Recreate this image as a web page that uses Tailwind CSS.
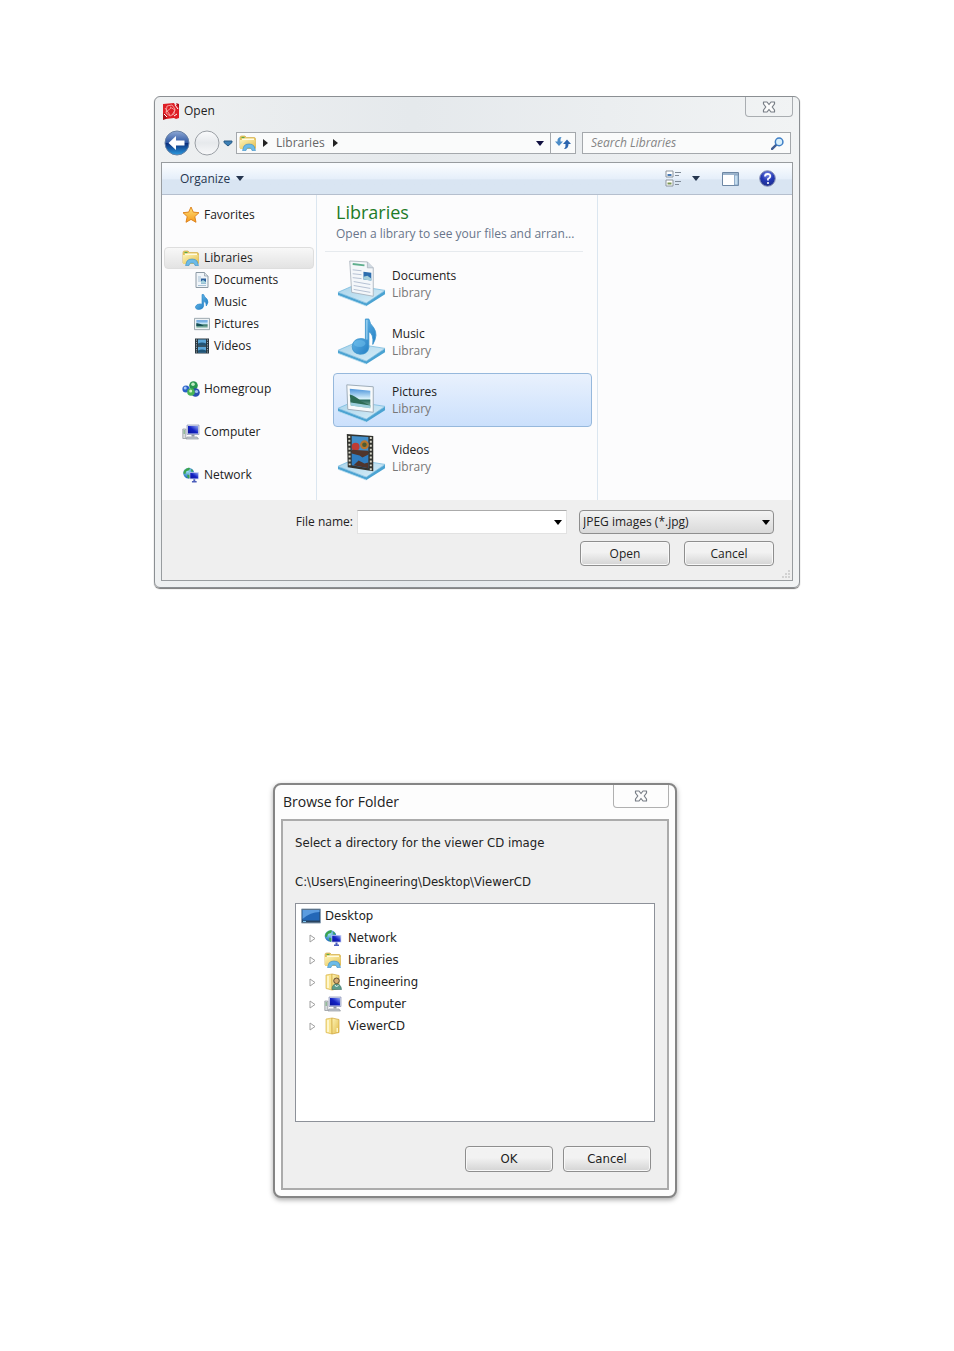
<!DOCTYPE html>
<html lang="en">
<head>
    <meta charset="UTF-8">
    <meta name="viewport" content="width=device-width, initial-scale=1.0">
    <title>Open / Browse for Folder</title>
    <script src="https://cdn.jsdelivr.net/npm/@tailwindcss/browser@4"></script>
</head>
<body class="bg-white text-xs text-[#222]">

    <!-- Shared icons -->
    <svg class="absolute size-0" aria-hidden="true">
        <defs>
            <linearGradient id="gFolder" x1="0" y1="0" x2="1" y2="1"><stop offset="0" stop-color="#fdf3b4"/><stop offset="1" stop-color="#e3bd4c"/></linearGradient>
            <linearGradient id="gNote" x1="0" y1="0" x2="1" y2="1"><stop offset="0" stop-color="#7cc8f2"/><stop offset="1" stop-color="#1473bd"/></linearGradient>
            <linearGradient id="gTray" x1="0" y1="0" x2="1" y2="1"><stop offset="0" stop-color="#a8d3ea"/><stop offset="1" stop-color="#d8eef8"/></linearGradient>
            <linearGradient id="gSky" x1="0" y1="0" x2="0" y2="1"><stop offset="0" stop-color="#4b93da"/><stop offset=".5" stop-color="#d5effa"/><stop offset=".6" stop-color="#2d6e60"/><stop offset="1" stop-color="#9cc7b9"/></linearGradient>
            <linearGradient id="gScreen" x1="0" y1="1" x2="1" y2="0"><stop offset="0" stop-color="#0a149a"/><stop offset=".5" stop-color="#1422c4"/><stop offset="1" stop-color="#8fa6f2"/></linearGradient>
            <linearGradient id="gBack" x1="0" y1="0" x2="0" y2="1"><stop offset="0" stop-color="#8ea8d4"/><stop offset=".48" stop-color="#315aa5"/><stop offset=".52" stop-color="#0b2f7d"/><stop offset="1" stop-color="#2b9be0"/></linearGradient>
            <linearGradient id="gFwd" x1="0" y1="0" x2="0" y2="1"><stop offset="0" stop-color="#fafbfc"/><stop offset=".5" stop-color="#e6e9ec"/><stop offset="1" stop-color="#f8f9fa"/></linearGradient>
            <radialGradient id="gGlobe" cx=".4" cy=".3" r=".7"><stop offset="0" stop-color="#a5e8f4"/><stop offset="1" stop-color="#1362b8"/></radialGradient>
            <radialGradient id="gHelp" cx=".5" cy=".25" r=".8"><stop offset="0" stop-color="#7a8be6"/><stop offset=".5" stop-color="#2438b4"/><stop offset="1" stop-color="#1b2c86"/></radialGradient>
            <linearGradient id="gStar" x1="0" y1="0" x2="0" y2="1"><stop offset="0" stop-color="#ffe27a"/><stop offset="1" stop-color="#f59a1b"/></linearGradient>
        </defs>

        <symbol id="down" viewBox="0 0 8 5"><path d="M0 0h8L4 5z" fill="currentColor"/></symbol>
        <symbol id="right" viewBox="0 0 5 8"><path d="M0 0v8l5-4z" fill="currentColor"/></symbol>
        <symbol id="expand" viewBox="0 0 7 9"><path d="M1 1v7l5-3.500z" fill="#fff" stroke="#a0a0a0"/></symbol>

        <symbol id="close" viewBox="0 0 14 12">
            <path d="M1.500 1h3.500L7 3.500 9 1h3.500v2L10.200 6l2.300 3v2H9L7 8.500 5 11H1.500V9l2.300-3-2.300-3z" fill="#fcfcfc" stroke="#777d85" stroke-width="1.200" stroke-linejoin="round"/>
        </symbol>

        <symbol id="app" viewBox="0 0 18 18">
            <path d="M1 2l11-1 1 2 4-1v14l-3 1-2-1-8 1-1-2-2 1z" fill="#de1f26"/>
            <path d="M5 4l5-1 3 4-1 5-4 2-4-3zM3 6l5 7M8 5l5 3-3 5M4 10l5-4" fill="none" stroke="#f9b7b4" stroke-width=".8"/>
            <path d="M1 11l4 4-1 2-3 1zM14 1l3 1v4z" fill="#a80f17"/>
            <path d="M2 12l3 3M13 3l3 4M12 14l3-2" stroke="#fff"/>
        </symbol>

        <symbol id="libraries" viewBox="0 0 18 16">
            <path d="M1 2.500Q1 1 2.500 1H6l1.500 1.500H15q1.500 0 1.500 1.500v9H1z" fill="#eccb62" stroke="#d3ae4e" stroke-width=".7"/>
            <path d="M3 3.500h12v3H3z" fill="#fffbe2"/>
            <path d="M1 5h15.500v9H1z" fill="url(#gFolder)"/>
            <path d="M2.500 2.500h3" stroke="#57a84d" stroke-width="1.200"/>
            <path d="M3.500 15.500l1.500-4.500Q6.500 9 10 9t5 2l1.500 4.500h-3.500l-.5-1.500q-.8-1-2.500-1t-2.500 1l-.5 1.500z" fill="#6cbbe8" stroke="#3a8dc6" stroke-width=".6"/>
        </symbol>

        <symbol id="folder" viewBox="0 0 18 18">
            <path d="M2 2l6-1v16l-6-1.500z" fill="#f9e591" stroke="#d9b44c" stroke-width=".7"/>
            <path d="M8 1l7 1.500v13L8 17z" fill="url(#gFolder)" stroke="#cfa53c" stroke-width=".7"/>
            <path d="M4 3v12" stroke="#fffbe0" stroke-width="1.500"/>
            <path d="M12.500 11h1.500v4h-1.500z" fill="#fff6c8"/>
        </symbol>

        <symbol id="user" viewBox="0 0 18 18">
            <use href="#folder"/>
            <path d="M8 16.500q0-5.500 4.500-5.500t5 5.500z" fill="#5d9d8b" stroke="#3b6e66" stroke-width=".6"/>
            <circle cx="12.500" cy="7.800" r="2.800" fill="#d8ad72" stroke="#55442c" stroke-width=".9"/>
            <path d="M11 12l1.500 2 2-2" fill="none" stroke="#e9f4f1"/>
        </symbol>

        <symbol id="star" viewBox="0 0 18 18">
            <path d="M9 1l2.300 5.100 5.700.6-4.200 3.900 1.200 5.700L9 13.400l-5 2.900 1.200-5.700L1 6.700l5.700-.6z" fill="url(#gStar)" stroke="#da7c14" stroke-width=".9" stroke-linejoin="round"/>
        </symbol>

        <symbol id="document" viewBox="0 0 16 16">
            <path d="M2 .5h8.500L14 4v11.500H2z" fill="#f0f5f9" stroke="#8d9aa5"/>
            <path d="M10.500.5V4H14" fill="#dbe3e8" stroke="#8d9aa5" stroke-width=".7"/>
            <path d="M4 5h3M4 7h3M4 9h3" stroke="#a8c2d6"/>
            <path d="M7 6.500h5v5H7z" fill="#2a5f9c"/>
            <path d="M7 9.500L9 8l3 2v1.500H7z" fill="#a8d3dd"/>
            <path d="M4 13.500h8" stroke="#a8c2d6"/>
        </symbol>

        <symbol id="music" viewBox="0 0 16 16">
            <path d="M8 .5h1.600q.7 2.500 3.400 4.500 2.300 2.800-.7 7 .4-3.600-2.700-4.700V12q-.4 3.200-4.800 3.500-3.800-.2-3.300-2.900.9-2.700 4.500-2.700 1.200 0 2 .4z" fill="url(#gNote)" stroke="#1c7fc7" stroke-width=".6"/>
        </symbol>

        <symbol id="picture" viewBox="0 0 17 14">
            <path d="M.5 1h16v12H.5z" fill="#eef2f4" stroke="#98a4ab"/>
            <path d="M2.500 3h12v8h-12z" fill="url(#gSky)"/>
            <path d="M2.500 6q5 .5 8 3h-8z" fill="#154f57"/>
        </symbol>

        <symbol id="video" viewBox="0 0 16 16">
            <path d="M1 .5h14v15H1z" fill="#2b3840"/>
            <path d="M4 1.500h8v5.700H4zM4 8.800h8v5.700H4z" fill="#5ca6d8"/>
            <path d="M4 5.500q4-2 8 0v1.700H4zM4 12.500q4-2 8 0v2H4z" fill="#215577"/>
            <path d="M2.500 1.500v13M13.500 1.500v13" stroke="#9fb0ba" stroke-width="1" stroke-dasharray="1.200 1.200"/>
        </symbol>

        <symbol id="homegroup" viewBox="0 0 18 16">
            <circle cx="4" cy="8" r="3.600" fill="#2a61c8"/><circle cx="3.200" cy="7" r="1.500" fill="#a9c9f8"/>
            <circle cx="11.500" cy="4.500" r="4.300" fill="#279650"/><circle cx="11" cy="3.300" r="1.800" fill="#bdeac2"/>
            <circle cx="13.500" cy="11.500" r="4.300" fill="#2950b2"/><circle cx="14.500" cy="10.500" r="1.600" fill="#a5c3f4"/>
            <circle cx="9" cy="11" r="3.800" fill="#48b455"/><circle cx="8.700" cy="10" r="1.500" fill="#d3f2c6"/>
        </symbol>

        <symbol id="computer" viewBox="0 0 18 16">
            <path d="M.8 5h3v9.500h-3z" fill="#d8dcdf" stroke="#8b9196" stroke-width=".7"/>
            <path d="M1.500 7h1.500M1.500 9h1.500" stroke="#4f9e55"/>
            <path d="M5 1h12v9.500H5z" fill="#d5daf0" stroke="#8a92b4" stroke-width=".7"/>
            <path d="M6 2h10v7.500H6z" fill="url(#gScreen)"/>
            <path d="M9.500 10.500h3v2h-3z" fill="#8d94a6"/>
            <path d="M5 13h10l1.500 2H4z" fill="#c7ccd4" stroke="#7f868f" stroke-width=".6"/>
        </symbol>

        <symbol id="network" viewBox="0 0 18 17">
            <circle cx="6.500" cy="6.500" r="5.800" fill="url(#gGlobe)"/>
            <path d="M2 3.500q3-3.500 6-2.500l-1 2.500-3 1-1 3L1 7q0-2 1-3.500zM5 8l3 1 .5 2-2 1.300q-2-1.500-1.500-4.300zM9 2q2 1 2.500 2.500L9.500 5z" fill="#3ba44c"/>
            <path d="M7.500 5.500h9.800V13H7.500z" fill="#c9d1f1"/>
            <path d="M8.200 6.200h8.400v6H8.200z" fill="url(#gScreen)"/>
            <path d="M11.500 13h2v2h-2zM10 15h5v1.500h-5z" fill="#4b5dbb"/>
        </symbol>

        <symbol id="desktop" viewBox="0 0 20 16">
            <path d="M.5 1h19v14H.5z" fill="#294461" stroke="#8ea2b5"/>
            <path d="M1.500 2h17v10.500h-17z" fill="#2367b7"/>
            <path d="M1.500 2h17v2q-9 0-17 7z" fill="#5b9ce0"/>
            <path d="M2 13.500h3" stroke="#7bc4ee"/>
        </symbol>

        <symbol id="tray" viewBox="0 0 50 50">
            <path d="M1 35L29 46 49 33v4L30 49 1 38z" fill="#4ba3d2"/>
            <path d="M1 35l16-7 32 5-19 13z" fill="url(#gTray)" stroke="#79bade" stroke-width=".8"/>
            <path d="M1 38l29 11" stroke="#b9def0" stroke-width=".8"/>
        </symbol>
        <symbol id="documents-lg" viewBox="0 2 50 50">
            <use href="#tray" width="50" height="50"/>
            <path d="M13 3l18 1 6 6v29L15 35z" fill="#f4f7fa" stroke="#a1acb6" stroke-width=".8"/>
            <path d="M31 4v6h6" fill="#cfd9e2" stroke="#a1acb6" stroke-width=".7"/>
            <path d="M16 6l12 1.500" stroke="#5faf8e" stroke-width="2"/>
            <path d="M16 12l9 1M16 16l9 1M16 20l9 1M17 24l17 3M17 28l17 3M17 32l17 3" stroke="#b3bfd2"/>
            <path d="M27 14l8 1v8l-8-1z" fill="#2c6dae"/><path d="M27 19l4-1 4 3v2l-8-1z" fill="#a5cfdb"/>
        </symbol>
        <symbol id="music-lg" viewBox="0 2 50 50">
            <use href="#tray" width="50" height="50"/>
            <path d="M29 3h3.500q1 5 5 9 5 7-1 17 1-11-4-13v16q-1 7-9 7-8-1-8-8 1-8 9-8 2.500 0 4.500 1z" fill="url(#gNote)" stroke="#3a93cc" stroke-width=".8"/>
            <ellipse cx="23" cy="28" rx="6" ry="3.500" fill="#72c2ee" opacity=".5"/>
            <path d="M30.500 4v20" stroke="#b6e1f7"/>
        </symbol>
        <symbol id="pictures-lg" viewBox="0 2 50 50">
            <use href="#tray" width="50" height="50"/>
            <path d="M10 11l27 2v26L11 36z" fill="#f8fafb" stroke="#9dabb7"/>
            <path d="M13 15l21 2v18l-20-3z" fill="url(#gSky)"/>
            <path d="M13 21q5 1 12 7l9 4v1l-20-4z" fill="#2d6c55"/>
            <path d="M14 29l20 3v3l-20-3z" fill="#9ccfdc"/>
        </symbol>
        <symbol id="videos-lg" viewBox="0 2 50 50">
            <use href="#tray" width="50" height="50"/>
            <path d="M10 2l27 2v36l-26-4z" fill="#32332f"/>
            <path d="M15 4l17 1v15l-17-1z" fill="#438fca"/><path d="M15 21l17 1v15l-17-3z" fill="#2f7dc0"/>
            <circle cx="19" cy="15" r="4" fill="#bf3b35"/><circle cx="28" cy="13" r="4.500" fill="#b9762f"/><circle cx="28" cy="13" r="2.300" fill="#4c5c33"/>
            <path d="M15 18l17 1v4l-6 3-3-2-8-2zM17 34l5-5 6 3 4-1v6l-15-3z" fill="#50352c"/>
            <path d="M12.500 4l.5 32M34.500 5v34" stroke="#d5d5c8" stroke-width="2" stroke-dasharray="2 2"/>
        </symbol>
    </svg>

    <main class="flex flex-col items-center pt-24 pb-36">

        <!-- Open dialog -->
        <section aria-label="Open" class="w-full max-w-[646px] rounded-md border border-[#8b8f93] bg-linear-to-r from-[#eef0f1] via-[#e5e9ec] via-40% to-[#f1f3f4] px-1.5 pb-1.5 font-['Open_Sans',sans-serif] shadow-[0_1px_1px_#777]">
            <header class="flex h-7 items-center pl-px">
                <svg class="size-[18px]"><use href="#app"/></svg>
                <h1 class="ml-1 flex-1">Open</h1>
                <button aria-label="Close" class="flex h-5 w-12 items-center justify-center self-start rounded-b border border-t-0 border-[#a9adb1]">
                    <svg class="h-3 w-3.5"><use href="#close"/></svg>
                </button>
            </header>

            <div class="flex items-center pt-[5px] pr-0.5 pb-1.5 pl-[3px]">
                <button aria-label="Back">
                    <svg class="size-[26px]" viewBox="0 0 26 26"><circle cx="13" cy="13" r="12" fill="url(#gBack)" stroke="#6780a3"/><path d="M4.500 13L12 6v4.500h8.500v5H12V20z" fill="#fff"/></svg>
                </button>
                <button aria-label="Forward" class="ml-1">
                    <svg class="size-[26px]" viewBox="0 0 26 26"><circle cx="13" cy="13" r="12" fill="url(#gFwd)" stroke="#9a9fa5"/></svg>
                </button>
                <button aria-label="Recent pages" class="mx-[3px]">
                    <svg class="h-[7px] w-2.5" viewBox="0 0 10 7"><path d="M1 1h8v1.500L5 6 1 2.500z" fill="#3c7fb5" stroke="#265a86"/></svg>
                </button>
                <div class="flex h-[22px] flex-1 items-center border border-[#a4a8ac] bg-[#fafbfb]">
                    <svg class="ml-0.5 h-4 w-[18px]"><use href="#libraries"/></svg>
                    <svg class="ml-1.5 h-2 w-[5px]"><use href="#right"/></svg>
                    <a href="#" class="mx-2 text-[#666]">Libraries</a>
                    <svg class="h-2 w-[5px]"><use href="#right"/></svg>
                    <button aria-label="Previous locations" class="mr-1.5 ml-auto text-[#101040]"><svg class="h-[5px] w-2"><use href="#down"/></svg></button>
                    <button aria-label="Refresh" class="flex h-full w-[25px] items-center justify-center border-l border-[#a4a8ac]">
                        <svg class="h-3 w-4" viewBox="0 0 16 12"><path d="M6.500 0Q2 0 2.500 4.500H0L4 9l4-4.500H5.500Q5 2 6.500 0z" fill="#4c8dc8"/><path d="M9 12q4.500 0 4.500-5H16l-4-4.500L8 7h2.500q.5 3-1.500 5z" fill="#2c65ae"/></svg>
                    </button>
                </div>
                <label class="ml-1.5 flex h-[22px] w-[209px] items-center border border-[#a4a8ac] bg-[#fafbfb] pr-1.5 pl-2">
                    <input type="search" aria-label="Search Libraries" placeholder="Search Libraries" class="min-w-0 flex-1 italic outline-none placeholder:text-[#858585]">
                    <svg class="size-[13px]" viewBox="0 0 12 12"><path d="M5.500 6.500L1 11" stroke="#3e5d94" stroke-width="2.200" stroke-linecap="round"/><circle cx="7.500" cy="4.500" r="3.500" fill="#d8effb" stroke="#3f7fc6" stroke-width="1.400"/></svg>
                </label>
            </div>

            <div class="border border-[#989c9f] bg-[#efefef]">
                <div class="flex h-8 items-center border-b border-[#b5bfce] bg-linear-to-b from-[#f8fbfe] from-10% via-[#e6effa] via-50% to-[#d9e5f2] to-55% pr-4 pl-[18px] text-[#26364f]">
                    <button class="flex items-center gap-1.5">Organize <svg class="h-[5px] w-2"><use href="#down"/></svg></button>
                    <button aria-label="Change view" class="ml-auto flex items-center gap-2.5">
                        <svg class="size-[17px]" viewBox="0 0 17 17"><path d="M1 1h7v6H1zM1 10h7v6H1z" fill="#fff" stroke="#8c949c"/><path d="M2.500 4h4v2h-4z" fill="#4779b5"/><path d="M2.500 12.500h4v2h-4z" fill="#7b9651"/><path d="M10 2.500h6M10 5.500h4M10 11.500h6M10 14.500h4" stroke="#808b98"/></svg>
                        <svg class="h-[5px] w-2"><use href="#down"/></svg>
                    </button>
                    <button aria-label="Show the preview pane" class="ml-[22px]">
                        <svg class="h-3.5 w-[17px]" viewBox="0 0 17 14"><path d="M.5.5h16v13H.500z" fill="#fff" stroke="#6d87a4"/><path d="M1 2h15" stroke="#7d9cbd" stroke-width="1.500"/><path d="M12.500 3h3.500v10h-3.500z" fill="#c4dcee" stroke="#7d9cbd" stroke-width=".8"/></svg>
                    </button>
                    <button aria-label="Get help" class="ml-5">
                        <svg class="size-[17px]" viewBox="0 0 17 17"><circle cx="8.500" cy="8.500" r="7.800" fill="url(#gHelp)" stroke="#8b94b8"/><path d="M6 6.500Q6 4 8.700 4t2.600 2.300Q11.300 8 9 9v1.500" fill="none" stroke="#fff" stroke-width="1.800"/><circle cx="9" cy="13" r="1.100" fill="#fff"/></svg>
                    </button>
                </div>

                <div class="flex h-[305px] bg-[#fcfcfd]">
                    <nav aria-label="Places" class="flex w-[155px] flex-col gap-[21px] border-r border-[#dbe6f0] px-0.5 pt-[9px]">
                        <a href="#" class="flex h-[22px] items-center gap-1 pl-[18px]"><svg class="size-[18px]"><use href="#star"/></svg>Favorites</a>
                        <ul>
                            <li><a href="#" aria-current="true" class="flex h-[22px] items-center gap-1 rounded-sm border border-[#dedede] bg-linear-to-b from-[#f8f8f8] to-[#e3e3e3] pl-[17px]"><svg class="h-4 w-[18px]"><use href="#libraries"/></svg>Libraries</a></li>
                            <li><a href="#" class="flex h-[22px] items-center gap-1 pl-[30px]"><svg class="size-4"><use href="#document"/></svg>Documents</a></li>
                            <li><a href="#" class="flex h-[22px] items-center gap-1 pl-[30px]"><svg class="size-4"><use href="#music"/></svg>Music</a></li>
                            <li><a href="#" class="flex h-[22px] items-center gap-1 pl-[30px]"><svg class="h-3.5 w-4"><use href="#picture"/></svg>Pictures</a></li>
                            <li><a href="#" class="flex h-[22px] items-center gap-1 pl-[30px]"><svg class="size-4"><use href="#video"/></svg>Videos</a></li>
                        </ul>
                        <a href="#" class="flex h-[22px] items-center gap-1 pl-[18px]"><svg class="h-4 w-[18px]"><use href="#homegroup"/></svg>Homegroup</a>
                        <a href="#" class="flex h-[22px] items-center gap-1 pl-[18px]"><svg class="h-4 w-[18px]"><use href="#computer"/></svg>Computer</a>
                        <a href="#" class="flex h-[22px] items-center gap-1 pl-[18px]"><svg class="h-4 w-[18px]"><use href="#network"/></svg>Network</a>
                    </nav>

                    <div class="w-[281px] border-r border-[#dbe6f0] pt-[5px]">
                        <div class="mr-3.5 ml-2 border-b border-[#e6eaee] pb-2 pl-[11px]">
                            <h2 class="text-lg leading-6 text-[#1e7b28]">Libraries</h2>
                            <p class="leading-[19px] text-[#68758a]">Open a library to see your files and arran...</p>
                        </div>
                        <ul class="mt-[5px] mr-[5px] ml-4 flex flex-col gap-1 leading-[17px]">
                            <li><a href="#" class="flex h-[54px] items-center gap-1.5 border border-transparent pl-[3px]"><svg class="size-[49px]"><use href="#documents-lg"/></svg><span>Documents<br><span class="text-[#777]">Library</span></span></a></li>
                            <li><a href="#" class="flex h-[54px] items-center gap-1.5 border border-transparent pl-[3px]"><svg class="size-[49px]"><use href="#music-lg"/></svg><span>Music<br><span class="text-[#777]">Library</span></span></a></li>
                            <li><a href="#" aria-current="true" class="flex h-[54px] items-center gap-1.5 rounded-sm border border-[#96b8dc] bg-linear-to-b from-[#e9f1fd] to-[#cbe0fc] pl-[3px]"><svg class="size-[49px]"><use href="#pictures-lg"/></svg><span>Pictures<br><span class="text-[#777]">Library</span></span></a></li>
                            <li><a href="#" class="flex h-[54px] items-center gap-1.5 border border-transparent pl-[3px]"><svg class="size-[49px]"><use href="#videos-lg"/></svg><span>Videos<br><span class="text-[#777]">Library</span></span></a></li>
                        </ul>
                    </div>
                </div>

                <form class="relative flex flex-col gap-[7px] pt-2.5 pr-[18px] pb-3.5">
                    <div class="flex items-center justify-end">
                        <label for="filename" class="mr-1">File name:</label>
                        <div class="mr-3 flex h-6 w-[210px] items-center border border-[#e2e2e2] border-t-[#ababab] bg-white pr-1">
                            <input id="filename" type="text" class="min-w-0 flex-1 px-1 outline-none">
                            <button type="button" aria-label="Recent file names" class="text-black"><svg class="h-[5px] w-2"><use href="#down"/></svg></button>
                        </div>
                        <div class="relative">
                            <select aria-label="File type" class="block h-6 w-[195px] appearance-none rounded-sm border border-[#8e8e8e] bg-linear-to-b from-[#f3f3f3] to-[#d9d9d9] pl-[3px]">
                                <option>JPEG images (*.jpg)</option>
                            </select>
                            <svg class="pointer-events-none absolute top-2.5 right-1 h-[5px] w-2 text-black"><use href="#down"/></svg>
                        </div>
                    </div>
                    <div class="flex justify-end gap-3.5">
                        <button type="button" class="h-[25px] w-[90px] rounded-sm border border-[#8e8e8e] bg-linear-to-b from-[#f2f2f2] from-45% to-[#d4d4d4] shadow-[inset_0_0_0_1px_#f8f8f8]">Open</button>
                        <button type="button" class="h-[25px] w-[90px] rounded-sm border border-[#8e8e8e] bg-linear-to-b from-[#f2f2f2] from-45% to-[#d4d4d4] shadow-[inset_0_0_0_1px_#f8f8f8]">Cancel</button>
                    </div>
                    <svg class="absolute right-0.5 bottom-0.5 size-2" viewBox="0 0 8 8"><path d="M6 0h2v2H6zM3 3h2v2H3zM6 3h2v2H6zM0 6h2v2H0zM3 6h2v2H3zM6 6h2v2H6z" fill="#d2d2d2"/></svg>
                </form>
            </div>
        </section>

        <!-- Browse for Folder dialog -->
        <section aria-label="Browse for Folder" class="mt-[195px] mr-1 w-full max-w-[404px] rounded-lg border-2 border-[#858585] bg-[#fdfdfd] px-1.5 pb-1.5 font-['DejaVu_Sans_Condensed','DejaVu_Sans',sans-serif] text-[13px] shadow-[0_2px_5px_#aaa]">
            <header class="flex h-[34px] items-center pl-0.5">
                <h1 class="flex-1 font-['Open_Sans',sans-serif] text-sm">Browse for Folder</h1>
                <button aria-label="Close" class="flex h-[23px] w-14 items-center justify-center self-start rounded-b border border-t-0 border-[#b0b0b0]">
                    <svg class="h-3 w-3.5"><use href="#close"/></svg>
                </button>
            </header>
            <div class="border-2 border-[#ababab] bg-[#efefef] px-3 pb-4">
                <p class="pt-3 leading-5">Select a directory for the viewer CD image</p>
                <p class="pt-[19px] leading-5">C:\Users\Engineering\Desktop\ViewerCD</p>
                <div class="mt-[11px] h-[219px] border border-[#8d9199] bg-white pt-px pl-[5px]">
                    <a href="#" class="flex h-[22px] items-center gap-1"><svg class="h-4 w-5"><use href="#desktop"/></svg>Desktop</a>
                    <ul class="pl-2">
                        <li class="flex h-[22px] items-center gap-2"><button aria-label="Expand Network"><svg class="h-[9px] w-[7px]"><use href="#expand"/></svg></button><a href="#" class="flex items-center gap-1.5"><svg class="size-[18px]"><use href="#network"/></svg>Network</a></li>
                        <li class="flex h-[22px] items-center gap-2"><button aria-label="Expand Libraries"><svg class="h-[9px] w-[7px]"><use href="#expand"/></svg></button><a href="#" class="flex items-center gap-1.5"><svg class="size-[18px]"><use href="#libraries"/></svg>Libraries</a></li>
                        <li class="flex h-[22px] items-center gap-2"><button aria-label="Expand Engineering"><svg class="h-[9px] w-[7px]"><use href="#expand"/></svg></button><a href="#" class="flex items-center gap-1.5"><svg class="size-[18px]"><use href="#user"/></svg>Engineering</a></li>
                        <li class="flex h-[22px] items-center gap-2"><button aria-label="Expand Computer"><svg class="h-[9px] w-[7px]"><use href="#expand"/></svg></button><a href="#" class="flex items-center gap-1.5"><svg class="size-[18px]"><use href="#computer"/></svg>Computer</a></li>
                        <li class="flex h-[22px] items-center gap-2"><button aria-label="Expand ViewerCD"><svg class="h-[9px] w-[7px]"><use href="#expand"/></svg></button><a href="#" class="flex items-center gap-1.5"><svg class="size-[18px]"><use href="#folder"/></svg>ViewerCD</a></li>
                    </ul>
                </div>
                <div class="mt-6 flex justify-end gap-2.5 pr-1">
                    <button class="h-[26px] w-[88px] rounded-sm border border-[#8e8e8e] bg-linear-to-b from-[#f2f2f2] from-45% to-[#d4d4d4] shadow-[inset_0_0_0_1px_#f8f8f8]">OK</button>
                    <button class="h-[26px] w-[88px] rounded-sm border border-[#8e8e8e] bg-linear-to-b from-[#f2f2f2] from-45% to-[#d4d4d4] shadow-[inset_0_0_0_1px_#f8f8f8]">Cancel</button>
                </div>
            </div>
        </section>
    </main>
</body>
</html>
